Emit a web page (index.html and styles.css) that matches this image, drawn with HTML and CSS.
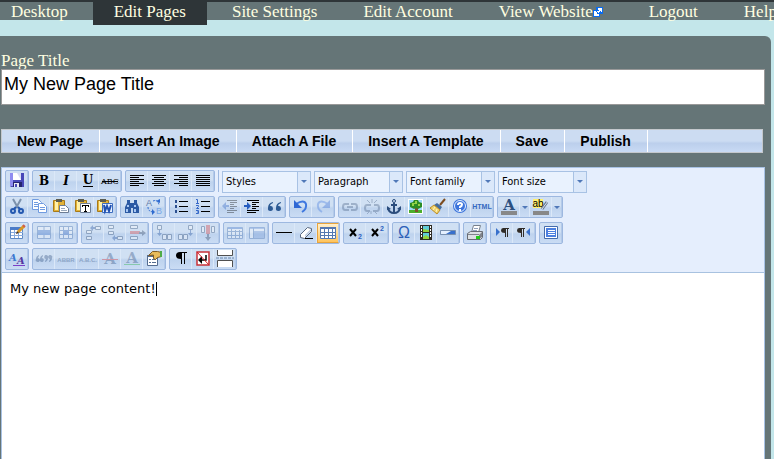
FILE: index.html
```html
<!DOCTYPE html>
<html lang="en">
<head>
<meta charset="utf-8">
<title>Edit Pages</title>
<link rel="stylesheet" href="styles.css">
</head>
<body>
<nav class="nav">
  <a href="#">Desktop</a>
  <a href="#" class="active">Edit Pages</a>
  <a href="#">Site Settings</a>
  <a href="#">Edit Account</a>
  <a href="#">View Website<svg class="ext" viewBox="0 0 10 10" shape-rendering="crispEdges"><path fill="#0a6cf0" d="M3 0h7v7H7v3H0V3h3z"/><path fill="#fff" d="M1 4h2v1h1v2h2v2H1zM5 1h4v4H8V4H7v1H6v1H5V5H4V4h2V3H5z"/></svg></a>
  <a href="#">Logout</a>
  <a href="#">Help</a>
</nav>
<main class="panel">
  <label class="label" for="title">Page Title</label>
  <input class="title" id="title" type="text" value="My New Page Title">
  <div class="actions">
    <button type="button">New Page</button><button type="button">Insert An Image</button><button type="button">Attach A File</button><button type="button">Insert A Template</button><button type="button">Save</button><button type="button">Publish</button>
  </div>
  <section class="editor">
    <div class="toolbar">
      <div class="row">
        <div class="group"><button type="button" aria-label="Save"><svg viewBox="0 0 20 20"><path fill="#4848b8" d="M3 2h14v14H4l-1-1z"/><path fill="#8f8cf0" d="M3 2h3v13H3z"/><path fill="#fff" d="M6 2h8v7H6z"/><path fill="#d8dcf4" d="M10 2h4v7z"/><path fill="#25256e" d="M6 11h9v5H6z"/><path fill="#e8e8f4" d="M7 12h5v4H7z"/><path fill="#4848b8" d="M8 13h2v3H8z"/></svg></button></div>
        <div class="group">
          <button type="button" aria-label="Bold"><svg viewBox="0 0 20 20"><text class="sf b" x="10" y="14">B</text></svg></button>
          <button type="button" aria-label="Italic"><svg viewBox="0 0 20 20"><text class="sf b i" x="10" y="14">I</text></svg></button>
          <button type="button" aria-label="Underline"><svg viewBox="0 0 20 20"><text class="sf b" x="10" y="13">U</text><path d="M5 15h10v1H5z"/></svg></button>
          <button type="button" aria-label="Strikethrough"><svg viewBox="0 0 20 20"><text class="sf s9" x="10" y="13">ABC</text><path d="M2 10h16v1H2z"/></svg></button>
        </div>
        <div class="group">
          <button type="button" aria-label="Align left"><svg viewBox="0 0 20 20"><path d="M3 4h14v1H3zM3 6h9v1H3zM3 8h14v1H3zM3 10h9v1H3zM3 12h14v1H3zM3 14h9v1H3z"/></svg></button>
          <button type="button" aria-label="Align center"><svg viewBox="0 0 20 20"><path d="M3 4h14v1H3zM5 6h10v1H5zM3 8h14v1H3zM5 10h10v1H5zM3 12h14v1H3zM5 14h10v1H5z"/></svg></button>
          <button type="button" aria-label="Align right"><svg viewBox="0 0 20 20"><path d="M3 4h14v1H3zM8 6h9v1H8zM3 8h14v1H3zM8 10h9v1H8zM3 12h14v1H3zM8 14h9v1H8z"/></svg></button>
          <button type="button" aria-label="Justify"><svg viewBox="0 0 20 20"><path d="M3 4h14v1H3zM3 6h14v1H3zM3 8h14v1H3zM3 10h14v1H3zM3 12h14v1H3zM3 14h14v1H3z"/></svg></button>
        </div>
        <span class="sep"></span>
        <span class="pick"><select aria-label="Styles"><option>Styles</option></select></span>
        <span class="pick"><select aria-label="Paragraph"><option>Paragraph</option></select></span>
        <span class="pick"><select aria-label="Font family"><option>Font family</option></select></span>
        <span class="pick"><select aria-label="Font size"><option>Font size</option></select></span>
      </div>
      <div class="row">
        <div class="group">
          <button type="button" aria-label="Cut"><svg viewBox="0 0 20 20"><path d="M6 2l5 9M14 2l-5 9" fill="none" stroke="#7c92ac" stroke-width="2"/><path d="M9 10l-2 2M11 10l2 2" stroke="#2458b0" stroke-width="2"/><circle cx="6" cy="14" r="2" fill="none" stroke="#2458b0" stroke-width="2"/><circle cx="14" cy="14" r="2" fill="none" stroke="#2458b0" stroke-width="2"/></svg></button>
          <button type="button" aria-label="Copy"><svg viewBox="0 0 20 20"><g fill="#fff" stroke="#6f9be0"><path d="M3.500 2.500h6l3 3v7h-9z"/><path d="M9.500 6.500h5l3 3v6h-8z"/></g><path stroke="#6f9be0" d="M5 5.500h4M5 7.500h4M5 9.500h4M11 10.500h5M11 12.500h5"/></svg></button>
          <button type="button" aria-label="Paste"><svg viewBox="0 0 20 20"><path fill="#e2b238" stroke="#a87a18" d="M2.500 3.500h11v11h-11z"/><path fill="#fff0a8" d="M4 4h3v9H4z"/><path fill="#5c5c50" d="M5 2h6v3H5z"/><path fill="#fff" stroke="#6c7c94" d="M8.500 8.500h6l3 3v4h-9z"/><path stroke="#98a8bc" d="M10 11.500h4M10 13.500h6"/></svg></button>
          <button type="button" aria-label="Paste as text"><svg viewBox="0 0 20 20"><path fill="#e2b238" stroke="#a87a18" d="M2.500 3.500h11v11h-11z"/><path fill="#fff0a8" d="M4 4h3v9H4z"/><path fill="#5c5c50" d="M5 2h6v3H5z"/><path fill="#fff" stroke="#6c7c94" d="M7.500 6.500h10v9h-10z"/><path d="M9 8h7v2h-1V9h-2v5h1v1h-3v-1h1V9h-2v1H9z"/></svg></button>
          <button type="button" aria-label="Paste from Word"><svg viewBox="0 0 20 20"><path fill="#e2b238" stroke="#a87a18" d="M2.500 3.500h11v11h-11z"/><path fill="#fff0a8" d="M4 4h3v9H4z"/><path fill="#5c5c50" d="M5 2h6v3H5z"/><path fill="#eaf2ff" stroke="#3c6cc0" d="M7.500 6.500h10v9h-10z"/><path fill="none" stroke="#2050b0" stroke-width="2" d="M9 8l1 6 2-5 2 5 2-6"/></svg></button>
        </div>
        <div class="group">
          <button type="button" aria-label="Find"><svg viewBox="0 0 20 20"><path fill="#2c5aa4" d="M5 3h3v3h4V3h3v3l2 4v6h-6v-5H9v5H3v-6l2-4z"/><path fill="#a9c8f4" d="M5 8h2v2H5zM12 8h2v2h-2zM4 12h2v3H4zM12 12h2v3h-2z"/></svg></button>
          <button type="button" aria-label="Replace"><svg viewBox="0 0 20 20"><text class="sn" x="5" y="9" fill="#6078a8">A</text><text class="sn" x="15" y="17" fill="#78a8e8">B</text><path fill="none" stroke="#2f6bd0" stroke-dasharray="2 1" d="M9 4q5-2 6 4M4 10q0 5 6 5"/><path fill="#2f6bd0" d="M12 4l4-2v4zM8 12l3 3-3 3z"/></svg></button>
        </div>
        <div class="group">
          <button type="button" aria-label="Bulleted list"><svg viewBox="0 0 20 20"><path d="M8 4h9v1H8zM8 9h9v1H8zM8 14h9v1H8z"/><path fill="#2c5090" d="M4 3h2v3H4zM4 8h2v3H4zM4 13h2v3H4z"/></svg></button>
          <button type="button" aria-label="Numbered list"><svg viewBox="0 0 20 20"><path d="M8 4h9v1H8zM8 9h9v1H8zM8 14h9v1H8z"/><path fill="none" stroke="#3568c8" d="M3 2.500h1.500V6M3 6.500h3M3 8.500h2.500v1L3.500 11.500H6M3 13.500h2.500v3H3M4 15h1"/></svg></button>
        </div>
        <div class="group">
          <button type="button" class="off" aria-label="Outdent"><svg viewBox="0 0 20 20"><path d="M7 3h10v1H7zM10 5h7v1h-7zM10 7h4v1h-4zM10 9h7v1h-7zM10 11h4v1h-4zM7 13h10v1H7zM7 15h7v1H7z"/><path fill="#245cc0" d="M2 9l4-4v3h3v2H6v3z"/></svg></button>
          <button type="button" aria-label="Indent"><svg viewBox="0 0 20 20"><path d="M5 3h12v1H5zM10 5h7v1h-7zM10 7h4v1h-4zM10 9h7v1h-7zM10 11h4v1h-4zM5 13h12v1H5zM5 15h9v1H5z"/><path fill="#245cc0" d="M9 9L5 5v3H2v2h3v3z"/></svg></button>
          <button type="button" aria-label="Blockquote"><svg viewBox="0 0 20 20"><path fill="#2c5a94" d="M9 5q-5 1-5 6a2.500 2.500 0 1 0 2-2q0-2 3-3zM17 5q-5 1-5 6a2.500 2.500 0 1 0 2-2q0-2 3-3z"/></svg></button>
        </div>
        <div class="group">
          <button type="button" aria-label="Undo"><svg viewBox="0 0 20 20"><path fill="none" stroke="#3f78e0" stroke-width="2" d="M5 7q8-5 10 0 1 5-4 8"/><path fill="#2f68d4" d="M3 3v8h8z"/></svg></button>
          <button type="button" class="off" aria-label="Redo"><svg viewBox="0 0 20 20"><path fill="none" stroke="#3f78e0" stroke-width="2" d="M15 7Q7 2 5 7q-1 5 4 8"/><path fill="#2f68d4" d="M17 3v8H9z"/></svg></button>
        </div>
        <div class="group">
          <button type="button" class="off" aria-label="Link"><svg viewBox="0 0 20 20"><path fill="none" stroke="#445c80" stroke-width="2" d="M9 7H5q-2 0-2 3t2 3h4M11 7h4q2 0 2 3t-2 3h-4M7 10h6"/></svg></button>
          <button type="button" class="off" aria-label="Unlink"><svg viewBox="0 0 20 20"><path fill="none" stroke="#445c80" stroke-width="2" d="M9 8H5q-2 0-2 3t2 3h3M12 8h3q2 0 2 3t-2 3h-4"/><path fill="none" stroke="#445c80" d="M10 2v4M5 3l3 3M15 3l-3 3M9 14v3M5 17l2-2M15 17l-2-2"/></svg></button>
          <button type="button" aria-label="Anchor"><svg viewBox="0 0 20 20"><path fill="none" stroke="#2a4c7c" stroke-width="2" d="M10 6v10M7 8h6M4 11q1 5 6 5t6-5"/><circle cx="10" cy="4" r="1.500" fill="none" stroke="#2a4c7c"/><path fill="#2a4c7c" d="M3 9l4 3-4 1zM17 9l-4 3 4 1z"/></svg></button>
          <button type="button" aria-label="Image"><svg viewBox="0 0 20 20"><path fill="#fff" d="M2 2h15v15H2z"/><path fill="#9ed8f8" d="M3 3h13v10H3z"/><path fill="#4cae2c" d="M3 13h13v3H3z"/><path fill="#80502c" d="M9 9h3v6H9z"/><path fill="#2c8c24" d="M4 6l3-1 1-2h4l1 2 3 1v4l-4 2-2-1-2 1-4-2z"/><path fill="#94d448" d="M6 6h3V4h2v3H8v2H6zM12 7h2v2h-2z"/></svg></button>
          <button type="button" aria-label="Clean up"><svg viewBox="0 0 20 20"><path stroke="#7c4c20" stroke-width="2" d="M17 2l-5 6"/><path fill="#446c9c" d="M9 6l5 4-2 3-6-5z"/><path fill="#f0d46c" stroke="#bc8c28" d="M6 8l6 5-3 4-7-6z"/><path stroke="#fff4c0" d="M7 10l-2 3M9 12l-1 3"/></svg></button>
          <button type="button" aria-label="Help"><svg viewBox="0 0 20 20"><circle cx="10" cy="9" r="7" fill="#3c74dc"/><circle cx="10" cy="9" r="5.500" fill="none" stroke="#e4f0ff"/><path fill="none" stroke="#fff" stroke-width="2" d="M8 8q0-2 2-2t2 1.500-2 2.500v1M10 12v2"/></svg></button>
          <button type="button" aria-label="HTML"><svg viewBox="0 0 20 20"><text class="html" x="10" y="12">HTML</text></svg></button>
        </div>
        <div class="group">
          <button type="button" aria-label="Text color"><svg viewBox="0 0 20 20"><text class="sf b big" x="10" y="13" fill="#2c5080">A</text><path fill="#888" d="M2 14h16v4H2z"/></svg></button>
          <button type="button" class="drop" aria-label="Text color options"></button>
          <button type="button" aria-label="Highlight color"><svg viewBox="0 0 20 20"><path fill="#fff06c" d="M2 2h10v9H2z"/><text class="ab" x="7" y="10">ab</text><path stroke="#687890" stroke-width="3" d="M16 5l-5 7"/><path stroke="#d8e4f0" d="M17 4l-6 8"/><path fill="#888" d="M2 14h16v4H2z"/></svg></button>
          <button type="button" class="drop" aria-label="Highlight color options"></button>
        </div>
      </div>
      <div class="row">
        <div class="group"><button type="button" aria-label="Table"><svg viewBox="0 0 20 20"><path fill="#fff" stroke="#5c88c4" d="M3.500 4.500h12v11h-12z"/><path fill="#4c7cc8" d="M3 4h13v3H3z"/><path stroke="#88aadc" d="M4 9.500h12M4 12.500h12M7.500 7v8M11.500 7v8"/><path stroke="#d89824" stroke-width="3" d="M17 3l-6 6"/><path fill="#443018" d="M9 11l1-3 2 2z"/><path stroke="#d05c50" stroke-width="2" d="M16 2l2 2"/></svg></button></div>
        <div class="group">
          <button type="button" class="off" aria-label="Row properties"><svg viewBox="0 0 20 20"><path fill="#fff" stroke="#3c68a8" d="M3.500 3.500h13v12h-13z"/><path fill="#3c70c8" d="M4 7h12v5H4z"/><path stroke="#3c68a8" d="M10 3v4M10 12v4"/></svg></button>
          <button type="button" class="off" aria-label="Cell properties"><svg viewBox="0 0 20 20"><path fill="#fff" stroke="#3c68a8" d="M3.500 3.500h13v12h-13zM3.500 7.500h13M3.500 11.500h13M7.500 3v12M12.500 3v12"/><path fill="#2c60bc" d="M7 7h6v5H7z"/></svg></button>
        </div>
        <div class="group">
          <button type="button" class="off" aria-label="Insert row before"><svg viewBox="0 0 20 20"><path fill="#fff" stroke="#28446c" d="M3.500 7.500h5v3h-5zM3.500 13.500h5v3h-5zM12.500 3.500h5v3h-5z"/><path fill="#184898" d="M7 5l3-3v2h2v2h-2v2z"/></svg></button>
          <button type="button" class="off" aria-label="Insert row after"><svg viewBox="0 0 20 20"><path fill="#fff" stroke="#28446c" d="M3.500 2.500h5v3h-5zM3.500 8.500h5v3h-5zM12.500 13.500h5v3h-5z"/><path fill="#184898" d="M7 15l3-3v2h2v2h-2v2z"/></svg></button>
          <button type="button" class="off" aria-label="Delete row"><svg viewBox="0 0 20 20"><path fill="#fff" stroke="#28446c" d="M3.500 2.500h7v3h-7zM3.500 13.500h7v3h-7z"/><path fill="#d43838" d="M3 8h10v3H3z"/><path fill="#283c5c" d="M12 9h3V7l4 3-4 3v-2h-3z"/></svg></button>
        </div>
        <div class="group">
          <button type="button" class="off" aria-label="Insert column before"><svg viewBox="0 0 20 20"><path fill="#fff" stroke="#28446c" d="M3.500 2.500h4v4h-4zM8.500 11.500h4v5h-4zM13.500 11.500h4v5h-4z"/><path fill="#184898" d="M5 7h1v3h2l-2.500 3L3 10h2z"/></svg></button>
          <button type="button" class="off" aria-label="Insert column after"><svg viewBox="0 0 20 20"><path fill="#fff" stroke="#28446c" d="M12.500 2.500h4v4h-4zM2.500 11.500h4v5h-4zM7.500 11.500h4v5h-4z"/><path fill="#184898" d="M14 7h1v3h2l-2.500 3-2.500-3h2z"/></svg></button>
          <button type="button" class="off" aria-label="Delete column"><svg viewBox="0 0 20 20"><path fill="#fff" stroke="#28446c" d="M3.500 3.500h3v6h-3zM13.500 3.500h3v6h-3z"/><path fill="#d43838" d="M8 2h4v9H8z"/><path fill="#283c5c" d="M9 11h2v3h2l-3 4-3-4h2z"/></svg></button>
        </div>
        <div class="group">
          <button type="button" class="off" aria-label="Split cells"><svg viewBox="0 0 20 20"><path fill="#fff" stroke="#3c68a8" d="M2.500 4.500h15v11h-15zM2.500 8.500h15M2.500 12.500h15M6.500 4v11M10.500 7v8M14.500 7v8"/><path fill="#3c70c8" d="M3 4h14v2H3z"/></svg></button>
          <button type="button" class="off" aria-label="Merge cells"><svg viewBox="0 0 20 20"><path fill="#fff" stroke="#3c68a8" d="M2.500 4.500h15v11h-15zM6.500 4v11"/><path fill="#3c70c8" d="M3 4h14v2H3zM7 8h10v7H7z" opacity=".7"/></svg></button>
        </div>
        <div class="group">
          <button type="button" aria-label="Horizontal rule"><svg viewBox="0 0 20 20"><path d="M2 9h16v1H2z"/></svg></button>
          <button type="button" aria-label="Remove formatting"><svg viewBox="0 0 20 20"><path fill="#fff" stroke="#586880" d="M4.500 11.500l7-7 4 1v3l-7 7-4-1z"/><path fill="#bccbe2" d="M9 12l6-6v2l-6 6z"/><path d="M9 15h8v1H9z"/></svg></button>
          <button type="button" class="on" aria-label="Guidelines"><svg viewBox="0 1 20 18"><path fill="#fff" stroke="#5478b0" d="M2.500 4.500h15v11h-15zM2.500 9.500h15M2.500 12.500h15M6.500 5v10M10.500 5v10M14.500 5v10"/><path fill="#5478b0" d="M2 4h16v2H2z"/></svg></button>
        </div>
        <div class="group">
          <button type="button" aria-label="Subscript"><svg viewBox="0 0 20 20"><path fill="none" stroke="#000" stroke-width="2" d="M5 6l6 7M11 6l-6 7"/><text class="tiny" x="15" y="16">2</text></svg></button>
          <button type="button" aria-label="Superscript"><svg viewBox="0 0 20 20"><path fill="none" stroke="#000" stroke-width="2" d="M5 6l6 7M11 6l-6 7"/><text class="tiny" x="15" y="8">2</text></svg></button>
        </div>
        <div class="group">
          <button type="button" aria-label="Special character"><svg viewBox="0 0 20 20"><text class="om" x="10" y="15">Ω</text></svg></button>
          <button type="button" aria-label="Media"><svg viewBox="0 0 20 20"><path fill="#302c24" d="M4 2h12v15H4z"/><path fill="#60ccd8" d="M7 3h6v6H7zM7 10h6v6H7z"/><path fill="#94d43c" d="M7 6l6 1v2H7zM7 14l3-2 3 2v2H7z"/><path fill="#fff" d="M5 3h1v2H5zM5 6h1v2H5zM5 9h1v2H5zM5 12h1v2H5zM14 3h1v2h-1zM14 6h1v2h-1zM14 9h1v2h-1zM14 12h1v2h-1z"/></svg></button>
          <button type="button" aria-label="Rule"><svg viewBox="0 0 20 20"><path fill="#3870cc" stroke="#7890b0" d="M2.500 7.500h15v4h-15z"/><path fill="#e4f0ff" d="M3 8h10l-5 3H3z"/></svg></button>
        </div>
        <div class="group"><button type="button" aria-label="Print"><svg viewBox="0 0 20 20"><path fill="#fff" stroke="#78808c" d="M6.500 9.500l2-7h7l-2 7z"/><path stroke="#90a0bc" d="M9 5.500h4M8 7.500h4"/><path fill="#dce0e4" stroke="#686c74" d="M2.500 10.500l3-2h12v6l-2 2h-13z"/><path fill="#80848c" d="M3 11h11v1H3zM14 12l3-3v5l-3 2z"/><path fill="#24cc18" d="M11 13h4v3h-4z"/></svg></button></div>
        <div class="group">
          <button type="button" aria-label="Left to right"><svg viewBox="0 0 20 20"><path fill="#3870cc" d="M4 5l4 4-4 4z"/><path fill="#302c28" d="M9 5h8v1h-1v8h-1V6h-1v8h-1v-4q-4 0-4-2.500T11 5z"/></svg></button>
          <button type="button" aria-label="Right to left"><svg viewBox="0 0 20 20"><path fill="#302c28" d="M3 5h8v1h-1v8H9V6H8v8H7v-4q-4 0-4-2.500T5 5z"/><path fill="#3870cc" d="M16 5l-4 4 4 4z"/></svg></button>
        </div>
        <div class="group"><button type="button" aria-label="Full screen"><svg viewBox="0 0 20 20"><path fill="#fff" stroke="#446cac" d="M3.500 3.500h13v12h-13z"/><path fill="#4c80e0" d="M5 5h10v9H5z"/><path fill="#fff" d="M7 7h7v1H7zM7 9h7v1H7zM7 11h7v1H7z"/></svg></button></div>
      </div>
      <div class="row">
        <div class="group"><button type="button" aria-label="Style properties"><svg viewBox="0 0 20 20"><text class="sf b i aa" x="6" y="12" fill="#3c78d0">A</text><text class="sf b i aa" x="14" y="15" fill="#5438a0">A</text><path fill="#7c40c8" d="M6 16h12v1H6z"/></svg></button></div>
        <div class="group">
          <button type="button" class="off" aria-label="Citation"><svg viewBox="0 0 20 20"><path fill="#2c4c7c" d="M5 6q-3 1-3 4a2 2 0 1 0 2-1q0-1 1-2zM9 6q-3 1-3 4a2 2 0 1 0 2-1q0-1 1-2zM11 13q3-1 3-4a2 2 0 1 0-2 1q0 1-1 2zM15 13q3-1 3-4a2 2 0 1 0-2 1q0 1-1 2z"/></svg></button>
          <button type="button" class="off" aria-label="Abbreviation"><svg viewBox="0 0 20 20"><text class="html dk" x="10" y="13">ABBR</text></svg></button>
          <button type="button" class="off" aria-label="Acronym"><svg viewBox="0 0 20 20"><text class="html dk" x="10" y="13">A.B.C.</text></svg></button>
          <button type="button" class="off" aria-label="Deletion"><svg viewBox="0 0 20 20"><text class="sf b big" x="10" y="15" fill="#2c4c7c">A</text><path fill="#e02020" d="M2 10h16v1H2z"/></svg></button>
          <button type="button" class="off" aria-label="Insertion"><svg viewBox="0 0 20 20"><text class="sf b big" x="10" y="14" fill="#2c4c7c">A</text><path fill="#18b030" d="M2 15h16v1H2z"/></svg></button>
          <button type="button" aria-label="Attributes"><svg viewBox="0 0 20 20"><path fill="#fff" stroke="#546c90" d="M3.500 6.500h10v10h-10z"/><path fill="#546c90" d="M3 6h11v2H3zM5 10h2v1H5zM8 10h4v1H8zM5 13h2v1H5zM8 13h4v1H8z"/><path fill="#e8bc5c" stroke="#805c24" d="M4.500 6.500l4-4h5l4 1v4l-4 1-2 2-2-1V6z"/><path fill="#50ac48" d="M16 2h2v6h-2z"/></svg></button>
        </div>
        <div class="group">
          <button type="button" aria-label="Visual characters"><svg viewBox="0 0 20 20"><path d="M6 3h10v1h-2v11h-1V4h-2v11h-1v-5Q5 10 5 6.500T9 3z"/></svg></button>
          <button type="button" aria-label="Nonbreaking space"><svg viewBox="0 0 20 20"><path fill="#fff" stroke="#c83038" stroke-width="1.500" d="M4 3h12v13H4z"/><path fill="none" stroke="#000" stroke-width="1.500" d="M13 6v5H8"/><path d="M5 11l4-4v8z"/><path fill="none" stroke="#d82028" d="M4 3l12 13"/></svg></button>
          <button type="button" aria-label="Page break"><svg viewBox="0 0 20 20"><path fill="#fff" stroke="#505050" d="M2.500 1v5.500h15V1M2.500 18v-6.500h15V18"/><path stroke="#6484ac" stroke-dasharray="3 1" d="M1 9h18"/></svg></button>
        </div>
      </div>
    </div>
    <div class="content" contenteditable="true" role="textbox" aria-label="Page content" spellcheck="false">My new page content!<span class="caret"></span></div>
  </section>
</main>
</body>
</html>
```
FILE: styles.css
```css
* { box-sizing: border-box; }

body {
  margin: 0;
  min-height: 100vh;
  display: flex;
  flex-direction: column;
  background: #c3e6ea;
  font-family: "Liberation Serif", serif;
  font-size: 17px;
  overflow-x: hidden;
}

.nav {
  display: flex;
  gap: 4px;
  height: 20px;
  margin-bottom: 16px;
  margin-left: -10px;
  border-top: 2px solid #2e3538;
  background: #657577;
  white-space: nowrap;
}

.nav a {
  flex: none;
  height: 18px;
  padding: 0 21px;
  line-height: 20px;
  color: #ffffe0;
  text-decoration: none;
}

.nav .active {
  height: 23px;
  background: #2e3538;
}

.ext {
  width: 10px;
  height: 10px;
}

.panel {
  flex: 1;
  display: flex;
  flex-direction: column;
  margin-right: 3px;
  padding: 16px 6px 0 1px;
  border-top-right-radius: 6px;
  background: #657577;
}

.label {
  line-height: 17px;
  color: #ffffe0;
}

.title {
  width: 100%;
  height: 36px;
  padding: 0 2px 6px;
  border: 1px solid #999;
  background: #fff;
  color: #000;
  font: 18px "Liberation Sans", sans-serif;
}

.actions {
  display: flex;
  height: 24px;
  margin: 24px 2px 14px 0;
  border: 1px solid #c4c8cc;
  background: linear-gradient(#ccdcf2 0 50%, #bccfec 60%, #c8daf4);
}

.actions button {
  padding: 0 16px 0 15px;
  border: 0;
  border-right: 1px solid #fff;
  background: none;
  color: #000;
  font: bold 14px "Liberation Sans", sans-serif;
  white-space: nowrap;
}

.editor {
  flex: 1;
  display: flex;
  flex-direction: column;
  border: 1px solid #a8c2e4;
  border-bottom: 0;
  background: #fff;
}

.toolbar {
  display: flex;
  flex-direction: column;
  gap: 4px;
  padding: 2px 3px;
  border-bottom: 1px solid #a8c2e0;
  background: #e5eefd;
}

.row {
  display: flex;
  gap: 3px;
}

.group {
  display: flex;
  height: 22px;
  border: 1px solid #9db8e0;
  border-radius: 2px;
  background: linear-gradient(#d0e0f3 0 45%, #bed3ee 55%, #cadcf4);
}

.group button {
  width: 22px;
  height: 20px;
  padding: 0 0 0 1px;
  border: 0;
  border-right: 1px solid #dbe8f8;
  background: none;
}

.group button:last-child { border-right-color: #b4cae9; }

.group svg {
  display: block;
  width: 20px;
  height: 20px;
}

.group .off svg { opacity: 0.35; }

.group .on {
  padding: 0;
  border: 1px solid #e8a43c;
  background: linear-gradient(#fff0cc, #ffc45c);
}

.group .on svg {
  height: 18px;
}

.group .drop {
  display: flex;
  align-items: center;
  justify-content: center;
  width: 10px;
}

.drop::before,
.pick::after {
  content: "";
  border: 3px solid transparent;
  border-top-color: #5078b8;
  border-bottom: 0;
}

.sep {
  width: 1px;
  background: #9db8e0;
}

.pick {
  position: relative;
  width: 89px;
  height: 22px;
}

.pick select {
  width: 100%;
  height: 100%;
  padding: 0 14px 0 3px;
  appearance: none;
  border: 1px solid #a8c2e4;
  border-radius: 0;
  background: linear-gradient(90deg, #e9f2fe 74px, #a8c2e4 74px 75px, #dbe8fa 75px);
  color: #000;
  font: 11px "DejaVu Sans Condensed", "Noto Sans", sans-serif;
}

.pick::after {
  position: absolute;
  top: 10px;
  right: 4px;
}

.content {
  flex: 1;
  padding: 7px 8px;
  outline: 0;
  color: #000;
  font: 13px/18px "DejaVu Sans", sans-serif;
}

.caret {
  display: inline-block;
  width: 1px;
  height: 14px;
  background: #000;
  vertical-align: -3px;
}

text {
  text-anchor: middle;
  font-family: "Liberation Sans", sans-serif;
}

.sf {
  font-family: "DejaVu Serif", serif;
  font-size: 12px;
}

.b { font-weight: bold; }
.i { font-style: italic; }
.s9 { font-size: 8px; }
.aa { font-size: 10px; }
.big { font-size: 15px; }
.sn { font-size: 9px; }

.html {
  font-size: 7px;
  font-weight: bold;
  fill: #3468c0;
}

.dk {
  font-size: 6px;
  fill: #2c4c7c;
}

.ab { font-size: 10px; }

.tiny {
  font-size: 7px;
  font-weight: bold;
  fill: #2c60c0;
}

.om {
  font-size: 16px;
  fill: #2c60b8;
}
```
